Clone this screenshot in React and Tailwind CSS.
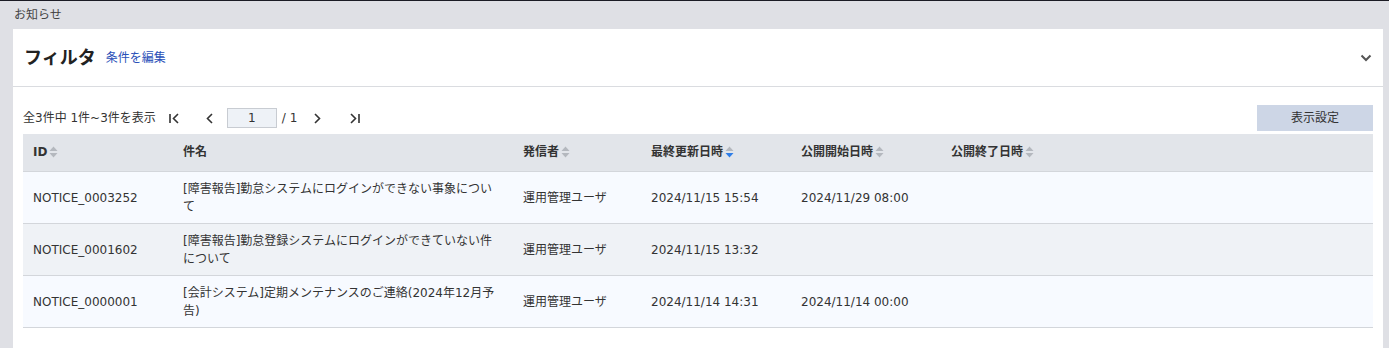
import React from 'react';

const FONT = { fontFamily: '"DejaVu Sans", "Noto Sans CJK JP", sans-serif' };

const rows = [
  {
    id: 'NOTICE_0003252',
    title: '[障害報告]勤怠システムにログインができない事象について',
    sender: '運用管理ユーザ',
    updated: '2024/11/15 15:54',
    start: '2024/11/29 08:00',
    end: '',
  },
  {
    id: 'NOTICE_0001602',
    title: '[障害報告]勤怠登録システムにログインができていない件について',
    sender: '運用管理ユーザ',
    updated: '2024/11/15 13:32',
    start: '',
    end: '',
  },
  {
    id: 'NOTICE_0000001',
    title: '[会計システム]定期メンテナンスのご連絡(2024年12月予告)',
    sender: '運用管理ユーザ',
    updated: '2024/11/14 14:31',
    start: '2024/11/14 00:00',
    end: '',
  },
];

function SortIcon({ active }) {
  return (
    <svg width="9" height="13" viewBox="0 0 9 13" className="ml-[2px] shrink-0">
      <path d="M4.5 0.5 L8.5 5 L0.5 5 Z" fill="#b4b8be" />
      <path d="M0.5 7 L8.5 7 L4.5 11.5 Z" fill={active ? '#2f7ee8' : '#b4b8be'} />
    </svg>
  );
}

function Th({ children, sortable, active, className = '' }) {
  return (
    <th className={`px-[10px] text-left font-bold align-middle ${className}`}>
      <span className="flex items-center">
        {children}
        {sortable && <SortIcon active={active} />}
      </span>
    </th>
  );
}

function PagerIcon({ type }) {
  const paths = {
    first: 'M2 3 V12 M10 3 L5.5 7.5 L10 12',
    prev: 'M8 3 L3.5 7.5 L8 12',
    next: 'M3 3 L7.5 7.5 L3 12',
    last: 'M3 3 L7.5 7.5 L3 12 M11 3 V12',
  };
  return (
    <svg width="13" height="15" viewBox="0 0 13 15" fill="none" stroke="#333" strokeWidth="1.6">
      <path d={paths[type]} />
    </svg>
  );
}

export default function App() {
  return (
    <div className="w-[1389px] h-[348px] overflow-hidden bg-[#dfe0e5] border-t border-[#1b1b24] text-[#333] text-[12px]" style={FONT}>
      <div className="h-[28px] pl-[14px] flex items-center text-[12px] text-[#444]">お知らせ</div>
      <div className="ml-[13px] mr-[6px] bg-white h-[400px]">
        <div className="h-[58px] flex items-center px-[11px] border-b border-[#dadce0]">
          <span className="text-[18px] font-bold text-[#222]">フィルタ</span>
          <span className="ml-[10px] text-[12px] text-[#2a4fb8]">条件を編集</span>
          <svg className="ml-auto" width="12" height="8" viewBox="0 0 12 8" fill="none" stroke="#555" strokeWidth="2">
            <path d="M1.5 1.5 L6 6 L10.5 1.5" />
          </svg>
        </div>
        <div className="px-[10px]">
          <div className="h-[47px] flex items-end pb-[3px]">
            <div className="flex items-center h-[26px] w-full">
              <span>全3件中 1件~3件を表示</span>
              <span className="ml-[12px] flex items-center"><PagerIcon type="first" /></span>
              <span className="ml-[23px] flex items-center"><PagerIcon type="prev" /></span>
              <div className="ml-[10px] w-[50px] h-[20px] bg-[#eef2f7] border border-[#c8ccd2] flex items-center justify-center">1</div>
              <span className="ml-[5px]">/ 1</span>
              <span className="ml-[15px] flex items-center"><PagerIcon type="next" /></span>
              <span className="ml-[23px] flex items-center"><PagerIcon type="last" /></span>
              <button className="ml-auto w-[116px] h-[26px] bg-[#cdd6e6] text-[12px] text-[#333]">表示設定</button>
            </div>
          </div>
          <table className="w-full border-collapse">
            <thead>
              <tr className="bg-[#e2e5ea] h-[37px] border-b border-[#d3d6db]">
                <Th sortable className="w-[150px]">ID</Th>
                <Th className="w-[340px]">件名</Th>
                <Th sortable className="w-[128px]">発信者</Th>
                <Th sortable active className="w-[150px]">最終更新日時</Th>
                <Th sortable className="w-[150px]">公開開始日時</Th>
                <Th sortable>公開終了日時</Th>
              </tr>
            </thead>
            <tbody>
              {rows.map((r, i) => (
                <tr key={r.id} className={`${i % 2 === 1 ? 'bg-[#eff2f6]' : 'bg-[#f7faff]'} border-b border-[#d3d6db]`}>
                  <td className="px-[10px] pt-2 pb-[7px] leading-[18px] align-middle">{r.id}</td>
                  <td className="px-[10px] pt-2 pb-[7px] leading-[18px] align-middle">{r.title}</td>
                  <td className="px-[10px] pt-2 pb-[7px] leading-[18px] align-middle">{r.sender}</td>
                  <td className="px-[10px] pt-2 pb-[7px] leading-[18px] align-middle">{r.updated}</td>
                  <td className="px-[10px] pt-2 pb-[7px] leading-[18px] align-middle">{r.start}</td>
                  <td className="px-[10px] pt-2 pb-[7px] leading-[18px] align-middle">{r.end}</td>
                </tr>
              ))}
            </tbody>
          </table>
        </div>
      </div>
    </div>
  );
}
